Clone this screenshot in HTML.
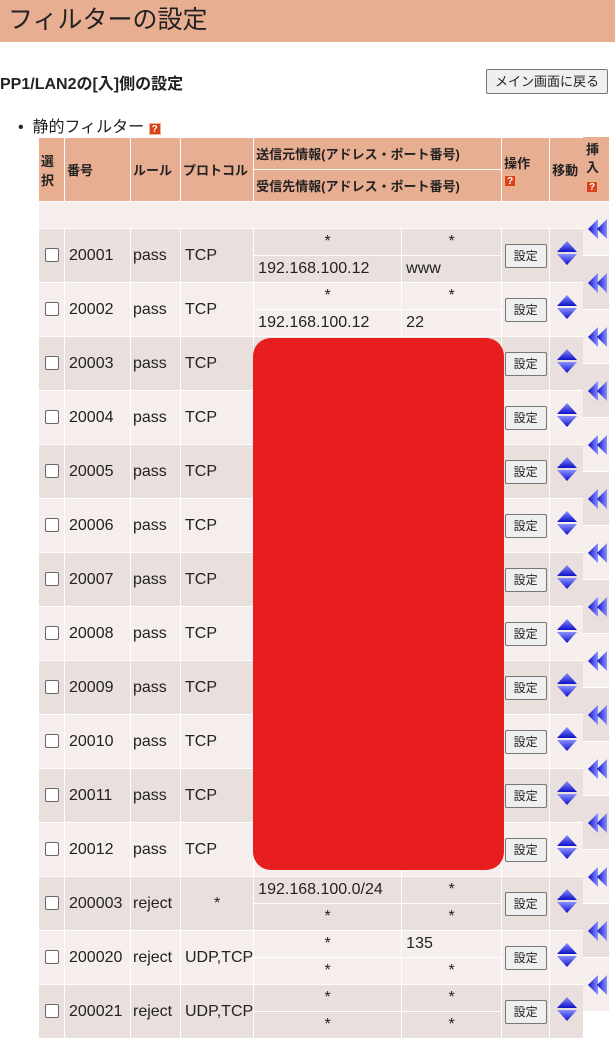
<!DOCTYPE html>
<html><head><meta charset="utf-8">
<style>
body{margin:0;width:615px;height:1006px;overflow:hidden;background:#fff;font-family:"Liberation Sans","Noto Sans CJK JP",sans-serif;color:#222;position:relative}
.hd{position:absolute;left:0;top:0;width:615px;height:42px;background:#e8ae92;font-size:25px;line-height:40px;padding-left:8px;box-sizing:border-box;color:#222}
.sub{position:absolute;left:0;top:70px;font-size:16px;font-weight:bold}
.btn{position:absolute;left:486px;top:69px;width:122px;height:25px;border:1px solid #777;border-radius:2px;background:#efefef;font-size:13px;text-align:center;line-height:24px;box-sizing:border-box}
.li{position:absolute;left:18px;top:113px;font-size:16px}
.q{display:inline-block;width:12px;height:12px;background:#d9401c;color:#fff;font-size:10px;font-weight:bold;line-height:12px;text-align:center;border:1px solid #f5b08a;box-sizing:border-box}
table{position:absolute;left:38px;top:137px;border-collapse:collapse;table-layout:fixed;font-size:16px}
td,th{border:1px solid #fff;padding:0;overflow:hidden;white-space:nowrap}
th{background:#e8ae92;font-size:13px;text-align:left;font-weight:bold;height:31px;padding-left:2px}
tr.d td{background:#e9dfdd;height:26px}
tr.l td{background:#f5eeec;height:26px}
.c{text-align:center}
.p{padding-left:4px}
.cb{display:inline-block;width:12px;height:12px;border:1px solid #666;border-radius:2px;background:#fff;vertical-align:middle}
.set{display:inline-block;width:42px;height:24px;border:1px solid #777;border-radius:2px;background:#efefef;font-size:12px;line-height:23px;text-align:center;box-sizing:border-box}
.ins{position:absolute;left:583px;width:26px;height:53px}
.blob{position:absolute;left:253px;top:338px;width:251px;height:532px;background:#e81e1e;border-radius:18px}
</style></head><body>
<div class="hd">フィルターの設定</div>
<div class="sub">PP1/LAN2の[入]側の設定</div>
<div class="btn">メイン画面に戻る</div>
<div class="li">•&nbsp; 静的フィルター <span class="q">?</span></div>
<svg width="0" height="0" style="position:absolute"><defs>
<linearGradient id="g" x1="0" y1="0" x2="0" y2="1"><stop offset="0" stop-color="#8890ff"/><stop offset="1" stop-color="#1010c8"/></linearGradient>
<linearGradient id="g2" x1="0" y1="0" x2="1" y2="0"><stop offset="0" stop-color="#1010c8"/><stop offset="1" stop-color="#8890ff"/></linearGradient>
</defs></svg>
<table>
<colgroup><col style="width:26px"><col style="width:66px"><col style="width:50px"><col style="width:72px"><col style="width:148px"><col style="width:100px"><col style="width:48px"><col style="width:34px"></colgroup>
<tr><th rowspan="2">選<br>択</th><th rowspan="2">番号</th><th rowspan="2">ルール</th><th rowspan="2">プロトコル</th><th colspan="2">送信元情報(アドレス・ポート番号)</th><th rowspan="2">操作<br><span class="q">?</span></th><th rowspan="2">移動</th></tr>
<tr><th colspan="2">受信先情報(アドレス・ポート番号)</th></tr>
<tr class="l"><td colspan="8" style="height:26px"></td></tr>
</table>
<div class="blob"></div>
<script>
var rows=[["20001","pass","TCP","*","*","192.168.100.12","www"],["20002","pass","TCP","*","*","192.168.100.12","22"]];
for(var i=3;i<=12;i++)rows.push(["200"+(i<10?"0":"")+i,"pass","TCP","","","",""]);
rows.push(["200003","reject","*","192.168.100.0/24","*","*","*"]);
rows.push(["200020","reject","UDP,TCP","*","135","*","*"]);
rows.push(["200021","reject","UDP,TCP","*","*","*","*"]);
var t=document.querySelector("table"),h="";
var mv='<svg width="22" height="26" viewBox="0 0 22 26"><path d="M11 1L21 12H1Z" fill="url(#g)"/><path d="M1 14H21L11 25Z" fill="url(#g)"/></svg>';
rows.forEach(function(r,i){var c=i%2?"l":"d";
function s(v){var al=(v=="*")?"c":"p";return '<td class="'+al+'">'+v+'</td>';}
h+='<tr class="'+c+'"><td rowspan="2" class="c"><span class="cb"></span></td><td rowspan="2" class="p">'+r[0]+'</td><td rowspan="2" class="p" style="padding-left:2px">'+r[1]+'</td><td rowspan="2" class="'+(r[2]=="*"?"c":"p")+'">'+r[2]+'</td>'+s(r[3])+s(r[4])+'<td rowspan="2" class="c"><span class="set">設定</span></td><td rowspan="2" class="c">'+mv+'</td></tr>';
h+='<tr class="'+c+'">'+s(r[5])+s(r[6])+'</tr>';});
t.insertAdjacentHTML("beforeend",h);
var b=document.body;
for(var k=0;k<15;k++){var y=202+54*k;var d=document.createElement("div");d.className="ins";d.style.top=y+"px";d.style.background=k%2?"#e9dfdd":"#f5eeec";
d.innerHTML='<svg width="26" height="53"><path d="M5 27L15 17V37Z" fill="url(#g2)"/><path d="M14 27L24 17V37Z" fill="url(#g2)"/></svg>';b.appendChild(d);}
var hh=document.createElement("div");hh.style.cssText="position:absolute;left:583px;top:137px;width:26px;height:64px;background:#e8ae92;font-size:13px;font-weight:bold;padding-left:3px;box-sizing:border-box;line-height:18px;padding-top:4px";hh.innerHTML='挿<br>入<br><span class="q">?</span>';b.appendChild(hh);
</script>
</body></html>
